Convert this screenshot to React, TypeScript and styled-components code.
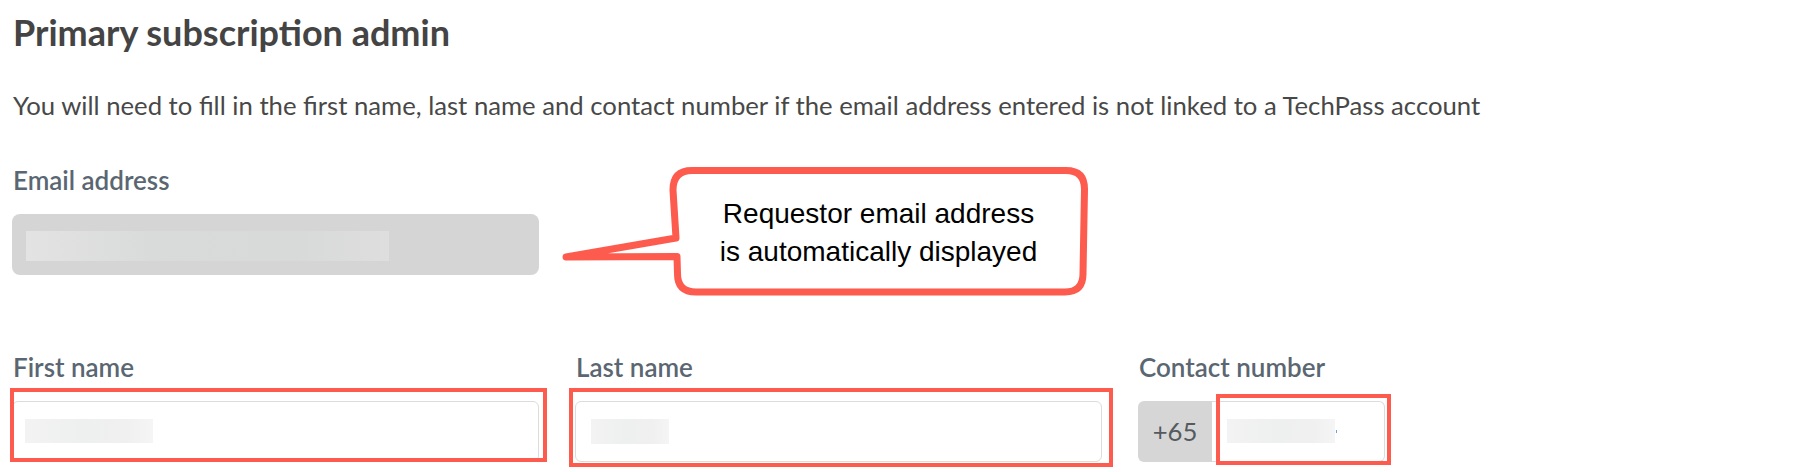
import React from "react";
import styled, { createGlobalStyle } from "styled-components";

const ACCENT = "#fc5b4d";

const GlobalStyle = createGlobalStyle`
  html, body {
    margin: 0;
    padding: 0;
    background: #ffffff;
  }
  body {
    font-family: Lato, "Open Sans", Arial, sans-serif;
  }
  *, *::before, *::after {
    box-sizing: border-box;
  }
`;

const Page = styled.main`
  position: relative;
  width: 1796px;
  height: 472px;
  padding: 10px 12px 0 12px;
  overflow: hidden;
`;

const Title = styled.h2`
  margin: 0 0 0 1px;
  font-size: 36px;
  line-height: 44px;
  font-weight: 700;
  color: #444444;
`;

const Intro = styled.p`
  margin: 34.5px 0 0 1px;
  font-size: 25.7px;
  line-height: 32px;
  font-weight: 400;
  color: #484848;
`;

const FieldLabel = styled.label`
  display: block;
  margin: 0 0 18px 1px;
  font-size: 26px;
  line-height: 32px;
  font-weight: 600;
  color: #5a6772;
`;

const EmailBlock = styled.section`
  margin-top: 43.4px;
  width: 527px;
`;

const ReadonlyBox = styled.div`
  height: 61px;
  border-radius: 8px;
  background: #d5d5d5;
  display: flex;
  align-items: center;
  padding: 4px 0 0 14px;
`;

const Redaction = styled.span<{ $w: number; $h: number; $tone: "light" | "grey" }>`
  display: block;
  width: ${(p) => p.$w}px;
  height: ${(p) => p.$h}px;
  background: ${(p) =>
    p.$tone === "grey"
      ? "linear-gradient(90deg, #e3e3e3 0%, #d9dada 35%, #d8d9d9 75%, #dedede 100%)"
      : "linear-gradient(90deg, #f3f3f3 0%, #eeefef 45%, #f0f0f0 80%, #f5f5f5 100%)"};
`;

const FieldRow = styled.section`
  margin-top: 75.9px;
  display: grid;
  grid-template-columns: 527px 527px 247px;
  column-gap: 36px;
`;

const Field = styled.div`
  display: flex;
  flex-direction: column;
`;

const InputShell = styled.div`
  position: relative;
`;

const TextBox = styled.div<{ $pad: number }>`
  height: 61px;
  border: 1px solid #dcdcdc;
  border-radius: 6px;
  background: #ffffff;
  display: flex;
  align-items: center;
  padding-left: ${(p) => p.$pad}px;
`;

const PhoneGroup = styled.div`
  display: flex;
  height: 61px;
`;

const PhonePrefix = styled.span`
  width: 74px;
  flex: none;
  display: flex;
  align-items: center;
  justify-content: center;
  background: #d6d6d6;
  border-radius: 6px 0 0 6px;
  font-size: 25.7px;
  color: #555a5e;
`;

const PhoneBox = styled.div`
  position: relative;
  flex: 1;
  display: flex;
  align-items: center;
  padding-left: 15px;
  border: 1px solid #dcdcdc;
  border-left: none;
  border-radius: 0 6px 6px 0;
  background: #ffffff;
`;

const Caret = styled.span`
  display: block;
  width: 1px;
  height: 3px;
  margin-left: 1px;
  background: #6aa3e0;
`;

const Highlight = styled.span<{ $inset: string }>`
  position: absolute;
  inset: ${(p) => p.$inset};
  border: 4px solid ${ACCENT};
  pointer-events: none;
`;

const Callout = styled.aside`
  position: absolute;
  left: 555px;
  top: 160px;
  width: 540px;
  height: 140px;
`;

const CalloutShape = styled.svg`
  position: absolute;
  inset: 0;
  overflow: visible;
`;

const CalloutText = styled.p`
  position: absolute;
  left: 114px;
  top: 35px;
  width: 419px;
  margin: 0;
  font-family: "Liberation Sans", Arial, sans-serif;
  font-size: 28px;
  line-height: 38px;
  color: #000000;
  text-align: center;
`;

export default function App() {
  return (
    <>
      <GlobalStyle />
      <Page>
        <Title>Primary subscription admin</Title>
        <Intro>
          You will need to fill in the first name, last name and contact number if the email
          address entered is not linked to a TechPass account
        </Intro>

        <EmailBlock>
          <FieldLabel>Email address</FieldLabel>
          <ReadonlyBox>
            <Redaction $w={363} $h={30} $tone="grey" />
          </ReadonlyBox>
        </EmailBlock>

        <FieldRow>
          <Field>
            <FieldLabel>First name</FieldLabel>
            <InputShell>
              <TextBox $pad={12}>
                <Redaction $w={128} $h={24} $tone="light" />
              </TextBox>
              <Highlight $inset="-13px -8px 0px -2px" />
            </InputShell>
          </Field>

          <Field>
            <FieldLabel>Last name</FieldLabel>
            <InputShell>
              <TextBox $pad={15}>
                <Redaction $w={78} $h={25} $tone="light" />
              </TextBox>
              <Highlight $inset="-13px -11px -5px -6px" />
            </InputShell>
          </Field>

          <Field>
            <FieldLabel>Contact number</FieldLabel>
            <PhoneGroup>
              <PhonePrefix>+65</PhonePrefix>
              <PhoneBox>
                <Redaction $w={108} $h={24} $tone="light" />
                <Caret />
                <Highlight $inset="-8px -7px -4px 4px" />
              </PhoneBox>
            </PhoneGroup>
          </Field>
        </FieldRow>

        <Callout>
          <CalloutShape width="540" height="140" viewBox="0 0 540 140">
            <path
              d="M137 10.5 L511 10.5 Q529.5 10.5 529.5 29 L528 114 Q528 132 510 132 L141 132 Q122.5 132 122.5 114 L122 96.5 L11 97 L121 78 L118 30 Q118 10.5 137 10.5 Z"
              fill="#ffffff"
              stroke={ACCENT}
              strokeWidth={7}
              strokeLinejoin="round"
            />
          </CalloutShape>
          <CalloutText>
            Requestor email address
            <br />
            is automatically displayed
          </CalloutText>
        </Callout>
      </Page>
    </>
  );
}
